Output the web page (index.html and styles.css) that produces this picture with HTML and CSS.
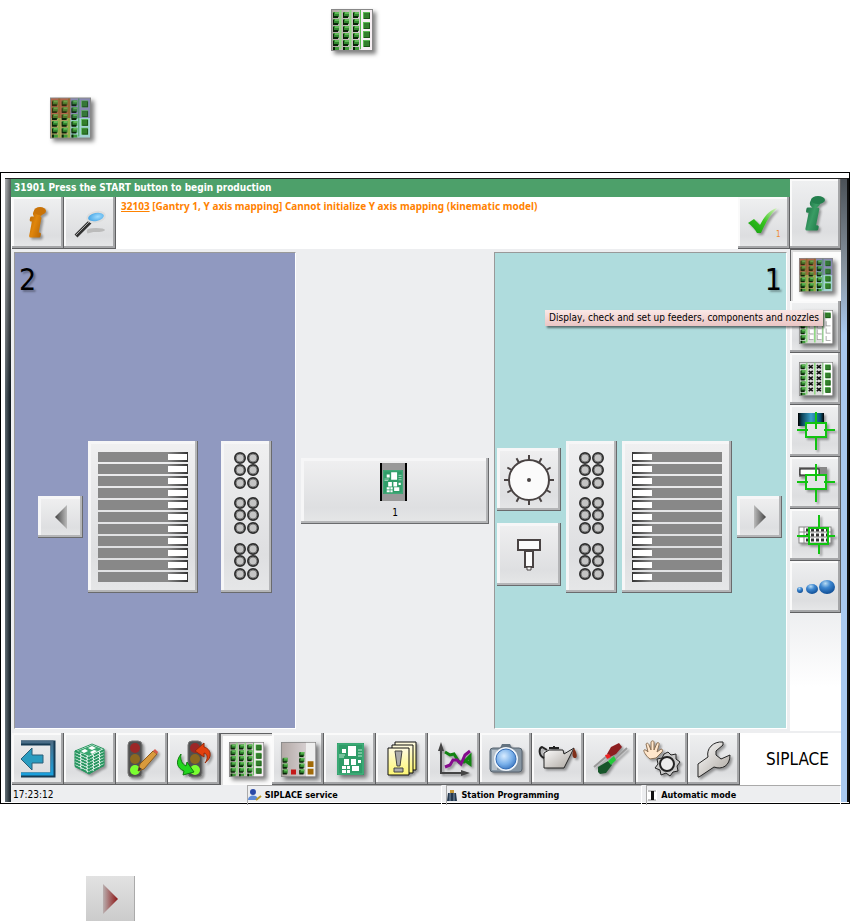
FILE: index.html
```
<!DOCTYPE html>
<html lang="en">
<head>
	<meta charset="utf-8">
	<title>SIPLACE station</title>
	<link rel="stylesheet" href="styles.css">
</head>
<body>
	<!-- shared icon parts -->
	<svg class="defs" width="0" height="0" aria-hidden="true">
		<defs>
			<linearGradient id="strip" x1="0" x2="1" y1="0" y2="0">
				<stop offset="0" stop-color="#b3a9a6"/><stop offset="1" stop-color="#e2dcdf"/>
			</linearGradient>
			<linearGradient id="arrowGrey"><stop offset="0" stop-color="#bbb"/><stop offset="1" stop-color="#444"/></linearGradient>
			<linearGradient id="arrowRed"><stop offset="0" stop-color="#b9b0b0"/><stop offset="1" stop-color="#8c1414"/></linearGradient>
			<linearGradient id="orange" x1="0" x2="1" y1="0" y2="1"><stop offset="0" stop-color="#a85a00"/><stop offset=".45" stop-color="#e0860c"/><stop offset="1" stop-color="#a85a00"/></linearGradient>
			<linearGradient id="green" x1="0" x2="1" y1="0" y2="1"><stop offset="0" stop-color="#0c5a34"/><stop offset=".5" stop-color="#3a9c64"/><stop offset="1" stop-color="#126b3c"/></linearGradient>
			<linearGradient id="tick" x1="0" x2="1" y1="1" y2="0"><stop offset="0" stop-color="#139a12"/><stop offset=".5" stop-color="#35c41c"/><stop offset="1" stop-color="#d4f3b8"/></linearGradient>
			<linearGradient id="steel" x1="0" x2="1" y1="0" y2="1"><stop offset="0" stop-color="#fff"/><stop offset="1" stop-color="#a9a39c"/></linearGradient>
			<linearGradient id="exit" x1="0" x2="0" y1="0" y2="1"><stop offset="0" stop-color="#4a6c86"/><stop offset="1" stop-color="#1a9fdc"/></linearGradient>
			<linearGradient id="tube"><stop offset="0" stop-color="#000"/><stop offset=".15" stop-color="#0c4358"/><stop offset=".5" stop-color="#3ba0c8"/><stop offset=".85" stop-color="#0c5878"/><stop offset="1" stop-color="#000"/></linearGradient>
			<radialGradient id="ball" cx=".4" cy=".25" r=".8"><stop offset="0" stop-color="#b8dcf4"/><stop offset=".4" stop-color="#3d86cf"/><stop offset="1" stop-color="#0a478f"/></radialGradient>
			<radialGradient id="lens" cx=".4" cy=".35" r=".7"><stop offset="0" stop-color="#d8ecff"/><stop offset=".6" stop-color="#79b0ea"/><stop offset="1" stop-color="#3b76c0"/></radialGradient>
			<radialGradient id="glass" cx=".6" cy=".5" r=".6"><stop offset="0" stop-color="#9fdcff"/><stop offset="1" stop-color="#3d9fe2"/></radialGradient>
			<linearGradient id="page" x1="0" x2="0" y1="0" y2="1"><stop offset="0" stop-color="#fffbe0"/><stop offset="1" stop-color="#fdf672"/></linearGradient>

			<g id="cell"><rect width="6" height="5" fill="#338a30"/><path d="M2 0h4v2H2z" fill="#62bb58"/><path d="M0 1h1v3h4v2H0z" fill="#0a2408"/></g>
			<g id="bigcell"><rect width="7" height="7" fill="#5cb854"/><path d="M1 1h6v6H1z" fill="#1c5216"/><rect x="1" y="1" width="5" height="5" fill="#33802c"/></g>
			<g id="hollow"><rect width="6" height="6" fill="#fff"/><path d="M0 0h1v5h5v1H0z" fill="#999"/></g>
			<g id="cross"><rect width="7" height="6" fill="#ddd"/><path d="M1 1l5 4M6 1L1 5" stroke="#111" stroke-width="2"/></g>
			<g id="col"><use href="#cell"/><use href="#cell" y="7"/><use href="#cell" y="14"/><use href="#cell" y="21"/><use href="#cell" y="28"/><path d="M0 35h6v3H0z" fill="#3f9a3a"/><path d="M0 35h2v3H0z" fill="#0a2408"/></g>
			<g id="hollowcol"><use href="#hollow"/><use href="#hollow" y="7"/><use href="#hollow" y="14"/><use href="#hollow" y="21"/><use href="#hollow" y="28"/></g>
			<g id="crosscol"><use href="#cross"/><use href="#cross" y="7"/><use href="#cross" y="14"/><use href="#cross" y="21"/><use href="#cross" y="28"/></g>
			<g id="bigcol"><use href="#bigcell"/><use href="#bigcell" y="10"/><use href="#bigcell" y="19"/><use href="#bigcell" y="28"/></g>
			<g id="lanes"><path d="M9.500 1v39M19.500 1v39" stroke="#8fd983" stroke-width="2"/><path d="M29.500 1v39" stroke="#55b84c"/></g>

			<symbol id="setup" viewBox="0 0 42 42">
				<rect width="42" height="42" fill="#888"/><rect x="1" y="1" width="40" height="40" fill="url(#strip)"/><rect x="30" y="1" width="11" height="40" fill="#f5eef2"/>
				<use href="#lanes"/><use href="#col" x="2" y="3"/><use href="#col" x="12" y="3"/><use href="#col" x="22" y="3"/><use href="#bigcol" x="32" y="3"/>
			</symbol>
			<symbol id="setupColor" viewBox="0 0 42 42">
				<rect width="42" height="42" fill="#888"/><path d="M1 1h20v20H1z" fill="#b8705a"/><path d="M1 21h20v20H1z" fill="#b8a068"/><path d="M21 1h20v20H21z" fill="#9496bd"/><path d="M21 21h20v20H21z" fill="#a3d2d4"/>
				<path d="M9.500 1v20M19.500 1v20" stroke="#8f7638" stroke-width="2"/><path d="M9.500 21v20M19.500 21v20" stroke="#8cb045" stroke-width="2"/><path d="M29.500 1v39" stroke="#439a55"/>
				<use href="#col" x="2" y="3"/><use href="#col" x="12" y="3"/><use href="#col" x="22" y="3"/><use href="#bigcol" x="32" y="3"/>
				<path d="M1 1h20v20H1z" fill="#a04820" opacity=".25"/><path d="M21 1h20v20H21z" fill="#404080" opacity=".15"/>
			</symbol>
			<symbol id="setupPart" viewBox="0 0 42 42">
				<rect width="42" height="42" fill="#888"/><rect x="1" y="1" width="40" height="40" fill="#ddd"/><rect x="30" y="1" width="11" height="40" fill="#fff"/>
				<use href="#lanes"/><use href="#col" x="2" y="3"/><use href="#hollowcol" x="12" y="3"/><use href="#hollowcol" x="22" y="3"/>
				<use href="#bigcell" x="32" y="3"/><use href="#hollow" x="33" y="14"/><use href="#hollow" x="33" y="23"/><use href="#hollow" x="33" y="32"/>
			</symbol>
			<symbol id="setupCross" viewBox="0 0 42 42">
				<rect width="42" height="42" fill="#888"/><rect x="1" y="1" width="40" height="40" fill="#ddd"/><rect x="30" y="1" width="11" height="40" fill="#fff"/>
				<use href="#lanes"/><use href="#col" x="2" y="3"/><use href="#crosscol" x="11" y="3"/><use href="#crosscol" x="21" y="3"/><use href="#bigcol" x="32" y="3"/>
			</symbol>
			<symbol id="board" viewBox="0 0 27 32">
				<rect width="27" height="32" fill="#2f9c68"/><path d="M1 1h25v30H1z" fill="none" stroke="#49b582"/>
				<g fill="#fff"><path d="M11 3h8v10h-8zM5 6h4v4H5zM7 16h5v6H7zM14 16h5v6h-5zM21 17h3v3h-3zM15 23h7v5h-7zM5 23h4v3H5zM10 23h3v3h-3zM5 27h4v3H5zM10 27h3v3h-3z"/></g>
				<path d="M21 7h4M21 10h4M21 13h4M2 12h6M2 14h5" stroke="#bfe7d2"/>
			</symbol>
			<symbol id="target" viewBox="0 0 40 40">
				<path d="M10 12h20v14H10z" fill="#e4e4e6"/><path d="M10 12h20v14H10zM20 1v17M20 26v13M1 19h11M28 19h11" fill="none" stroke="#12c412" stroke-width="2"/>
			</symbol>
			<symbol id="light" viewBox="0 0 18 38">
				<rect x="1" y="1" width="14" height="36" rx="4" fill="#505050" stroke="#777"/><circle cx="8" cy="8" r="5" fill="#9c2727"/><circle cx="8" cy="19" r="5" fill="#8c6820"/><circle cx="8" cy="30" r="5" fill="#7bff32"/>
			</symbol>
			<g id="cup"><circle cx="6" cy="6" r="5" fill="#c4c4c4" stroke="#2e2e2e" stroke-width="2"/><circle cx="6" cy="6" r="4" fill="none" stroke="#777"/></g>
			<g id="cups"><use href="#cup"/><use href="#cup" x="13"/><use href="#cup" y="12"/><use href="#cup" x="13" y="12"/><use href="#cup" y="25"/><use href="#cup" x="13" y="25"/></g>
			<symbol id="nozzles" viewBox="0 0 25 130"><use href="#cups"/><use href="#cups" y="45"/><use href="#cups" y="91"/></symbol>
			<symbol id="arrow" viewBox="0 0 12 24"><path d="M0 0l12 12L0 24z" fill="url(#arrowGrey)"/></symbol>
		</defs>
	</svg>

	<p class="line first"><svg class="tile" width="42" height="42"><use href="#setup"/></svg></p>
	<p class="line second"><svg class="tile" width="41" height="42"><use href="#setupColor"/></svg></p>

	<div class="frame">
		<div class="edge left"></div>
		<div class="app">
			<header class="head">
				<div class="status">31901 Press the START button to begin production</div>
				<div class="alert">
					<button class="btn" aria-label="Information">
						<svg class="shade" width="50" height="50"><text class="info" x="23" y="38" font-size="34" fill="url(#orange)" stroke="url(#orange)">i</text><ellipse cx="27" cy="13" rx="6" ry="4" fill="#c97308"/></svg>
					</button>
					<button class="btn" aria-label="Search">
						<svg width="36" height="36" viewBox="0 0 36 36">
							<ellipse cx="24" cy="25" rx="9" ry="2" fill="#bbb"/><path d="M15 27l8-2" stroke="#bbb" stroke-width="3"/>
							<path d="M4 31L18 17" stroke="#333" stroke-width="4"/><path d="M4 30L17 17" stroke="#aaa"/>
							<ellipse cx="24" cy="12" rx="9" ry="5" transform="rotate(-12 24 12)" fill="url(#glass)" stroke="#ddd" stroke-width="2"/>
						</svg>
					</button>
					<p class="message"><a href="#">32103</a> [Gantry 1, Y axis mapping] Cannot initialize Y axis mapping (kinematic model)</p>
					<button class="btn" aria-label="Confirm">
						<svg width="40" height="40" viewBox="0 0 40 40">
							<path class="shade" d="M4 20l6-4 6 6C20 14 25 7 33 5 26 12 22 19 17 30h-4C11 26 8 23 4 20z" fill="url(#tick)"/>
							<text class="count" x="32" y="34">1</text>
						</svg>
					</button>
				</div>
			</header>

			<nav class="side">
				<button class="btn help" aria-label="Help"><svg class="shade" width="50" height="64"><text class="info" x="22" y="47" font-size="40" fill="url(#green)" stroke="url(#green)">i</text><ellipse cx="27" cy="18" rx="7" ry="4" fill="#24804e"/></svg></button>
				<div class="hint">
					<button class="btn on" aria-describedby="tip" aria-label="Setup"><svg class="tile" width="34" height="34"><use href="#setupColor"/></svg></button>
					<span class="tip" id="tip" role="tooltip">Display, check and set up feeders, components and nozzles</span>
				</div>
				<button class="btn" aria-label="Partial setup"><svg class="tile" width="34" height="34"><use href="#setupPart"/></svg></button>
				<button class="btn" aria-label="Disabled tracks"><svg class="tile" width="34" height="34"><use href="#setupCross"/></svg></button>
				<button class="btn" aria-label="Teach tube">
					<svg class="shade" width="40" height="40"><rect x="2" y="2" width="26" height="13" fill="url(#tube)"/><use href="#target"/></svg>
				</button>
				<button class="btn" aria-label="Teach feeder">
					<svg class="shade" width="40" height="40"><rect x="3" y="4" width="28" height="10" fill="#888"/><rect x="4" y="6" width="19" height="6" fill="#fff" stroke="#111"/><use href="#target"/></svg>
				</button>
				<button class="btn" aria-label="Teach tray">
					<svg class="shade" width="40" height="40" viewBox="0 0 40 40">
						<rect x="3" y="12" width="32" height="16" fill="#fff" stroke="#888"/><path d="M3 17h32M3 22h32M8 12v16" stroke="#888"/>
						<path d="M10 15h24M10 20h24M10 25h24" stroke="#333" stroke-width="3" stroke-dasharray="3 2"/>
						<path d="M13 13h19v16H13zM23 0v13M23 29v10M1 21h12M32 21h7" fill="none" stroke="#12c412" stroke-width="2"/>
					</svg>
				</button>
				<button class="btn" aria-label="More">
					<svg width="40" height="20"><circle cx="4" cy="13" r="3" fill="url(#ball)"/><ellipse cx="16" cy="12" rx="6" ry="5" fill="url(#ball)"/><ellipse cx="31" cy="10" rx="8" ry="7" fill="url(#ball)"/></svg>
				</button>
			</nav>

			<main class="areas">
				<section class="area blue">
					<h2>2</h2>
					<div class="parts">
						<button class="raised move" aria-label="Previous"><svg class="flip" width="12" height="24"><use href="#arrow"/></svg></button>
						<button class="raised feeders flip" aria-label="Feeders, area 2"><i></i><i></i><i></i><i></i><i></i><i></i><i></i><i></i><i></i><i></i><i></i></button>
						<button class="raised nozzles" aria-label="Nozzles, area 2"><svg width="25" height="130"><use href="#nozzles"/></svg></button>
					</div>
				</section>
				<section class="area middle">
					<button class="raised conveyor">
						<svg width="30" height="38" viewBox="0 0 30 38"><path d="M2 0h24v38H2z" fill="#999"/><path d="M0 0h2v38H0zM25 0h2v38h-2z" fill="#fff"/><path d="M1 0v38M26 0v38" stroke="#000" stroke-width="2"/><use href="#board" x="3" y="7" width="20" height="24"/></svg>
						1
					</button>
				</section>
				<section class="area teal">
					<h2>1</h2>
					<div class="parts">
						<div class="tools">
							<button class="raised tool" aria-label="Head">
								<svg width="52" height="52" viewBox="-26 -26 52 52">
									<g stroke="#494343" stroke-width="2"><path d="M0-25v5M0 20v5M-25 0h5M20 0h5"/><path d="M0-25v5M0 20v5M-25 0h5M20 0h5" transform="rotate(30)"/><path d="M0-25v5M0 20v5M-25 0h5M20 0h5" transform="rotate(60)"/></g>
									<circle r="20" fill="#fbfbfb" stroke="#494343" stroke-width="2"/><circle r="2" fill="#494343"/>
								</svg>
							</button>
							<button class="raised tool" aria-label="Nozzle">
								<svg width="24" height="32" viewBox="0 0 24 32"><g fill="#fbfbfb" stroke="#494343" stroke-width="2"><path d="M1 1h22v10H1z"/><path d="M8 12h8v16H8z"/><path d="M10 28h4v3h-4z" stroke-width="1"/></g></svg>
							</button>
						</div>
						<button class="raised nozzles" aria-label="Nozzles, area 1"><svg width="25" height="130"><use href="#nozzles"/></svg></button>
						<button class="raised feeders" aria-label="Feeders, area 1"><i></i><i></i><i></i><i></i><i></i><i></i><i></i><i></i><i></i><i></i><i></i></button>
						<button class="raised move" aria-label="Next"><svg width="12" height="24"><use href="#arrow"/></svg></button>
					</div>
				</section>
			</main>

			<div class="toolbar">
				<button class="btn" aria-label="Exit">
					<svg width="40" height="40" viewBox="0 0 40 40"><path d="M3 4h32v32H3" fill="none" stroke="#173b54" stroke-width="5"/><path d="M3 3h31v32H3" fill="none" stroke="url(#exit)" stroke-width="3"/><path d="M3 20L14 9v7h11v8H14v7z" fill="#2a9cc0" stroke="#2a5f78"/></svg>
				</button>
				<button class="btn" aria-label="Board stack">
					<svg class="shade" width="36" height="34" viewBox="0 0 36 34">
						<path d="M3 9v15l14 8 15-9V7L20 2z" fill="#fff" stroke="#26955f"/><path d="M3 9l14 7 15-8M3 12l14 7 15-8M3 15l14 7 15-8M3 18l14 7 15-8M3 21l14 7 15-8M3 24l14 7 15-8" fill="none" stroke="#26955f" stroke-width="2" stroke-dasharray="6 1"/>
						<path d="M5 9l15-6 10 4-13 7z" fill="#39a66f"/><path d="M9 9l4-2 3 2-4 2zM16 6l4-2 4 2-4 2zM18 10l4-2 3 1-5 3z" fill="#fff"/>
					</svg>
				</button>
				<button class="btn" aria-label="Edit job">
					<svg class="shade" width="36" height="40" viewBox="0 0 36 40"><use href="#light" x="3" y="1" width="18" height="38"/><path d="M14 32l2-7L29 12l4 3-13 15z" fill="#d99a3c" stroke="#8c5a1c"/><path d="M29 12l2-2 3 3-1 2z" fill="#d85a4a"/><path d="M14 32l1-4 3 2z" fill="#333"/></svg>
				</button>
				<button class="btn" aria-label="Restart job">
					<svg class="shade" width="38" height="40" viewBox="0 0 38 40"><use href="#light" x="12" y="1" width="18" height="38"/><path d="M30 24c8-6 6-14-1-16V4l-9 8 9 6v-4c4 1 4 6 1 10z" fill="#e2410f" stroke="#962808"/><path d="M6 15c-6 8-4 14 3 17l-1 4 11-3-7-10-1 4c-4-2-6-6-5-12z" fill="#22d51e" stroke="#107a10"/></svg>
				</button>
				<button class="btn on" aria-label="Setup view"><svg class="tile" width="35" height="35"><use href="#setup"/></svg></button>
				<button class="btn" aria-label="Fill levels">
					<svg class="tile" width="35" height="35" viewBox="0 0 42 42"><rect width="42" height="42" fill="#888"/><rect x="1" y="1" width="40" height="40" fill="url(#strip)"/><rect x="30" y="1" width="11" height="40" fill="#eee"/>
						<use href="#cell" x="2" y="19"/><use href="#cell" x="2" y="26"/><use href="#cell" x="2" y="33"/><use href="#cell" x="22" y="12"/><use href="#cell" x="22" y="19"/><use href="#cell" x="22" y="26"/><use href="#cell" x="22" y="33"/>
						<path d="M12 33h6v6h-6z" fill="#c41919"/><path d="M32 23h7v7h-7zM32 32h7v7h-7z" fill="#a16a08"/></svg>
				</button>
				<button class="btn" aria-label="Board"><svg class="tile" width="27" height="32"><use href="#board"/></svg></button>
				<button class="btn" aria-label="Messages">
					<svg class="shade" width="32" height="36" viewBox="0 0 32 36"><g fill="url(#page)" stroke="#111"><path d="M9 1h21v28H9z"/><path d="M6 4h21v28H6z"/><path d="M2 7h21v27H2z"/></g><path d="M9 10h7l-2 15h-3zM8 27h9v4H8z" fill="#aaa" stroke="#444"/></svg>
				</button>
				<button class="btn" aria-label="Statistics">
					<svg class="shade" width="36" height="36" viewBox="0 0 36 36"><path d="M5 33V6M4 32h27" stroke="#444" stroke-width="2"/><path d="M5 1l3 9H2zM34 32l-9-3v6z" fill="#444"/><path d="M9 11l5 3 4-1 5 8 5 0 6-6 0 8-7-5" fill="none" stroke="#118311" stroke-width="3"/><path d="M9 26l5-2 3-5 4 0 4 4 4-9 5-4" fill="none" stroke="#850b8c" stroke-width="3"/></svg>
				</button>
				<button class="btn" aria-label="Camera">
					<svg class="shade" width="36" height="32" viewBox="0 0 36 32"><path d="M12 5l2-4h8l2 4z" fill="#63727f"/><rect x="2" y="5" width="32" height="24" rx="3" fill="#8796a3" stroke="#56636e"/><path d="M4 7h5v20H4z" fill="#b6c0c8"/><circle cx="18" cy="16" r="12" fill="#eef4fa"/><circle cx="18" cy="16" r="10" fill="url(#lens)" stroke="#336cb5"/></svg>
				</button>
				<button class="btn" aria-label="Lubrication">
					<svg class="shade" width="40" height="28" viewBox="0 0 40 28"><path d="M6 8l5-3h14l1 4 10-6-10 20H6z" fill="url(#steel)" stroke="#222" stroke-width="1"/><path d="M6 13C0 10 1 3 4 2l5 3" fill="none" stroke="#222" stroke-width="2"/><path d="M11 3h10M16 1v3" stroke="#222" stroke-width="2"/><path d="M36 3c4 7 3 10 1 10s-4-3-1-10z" fill="#80301a"/></svg>
				</button>
				<button class="btn" aria-label="Tools">
					<svg class="shade" width="36" height="34" viewBox="0 0 36 34"><path d="M2 25l14-12M35 6L22 18" stroke="#999" stroke-width="2"/><path d="M15 12l4-7 8-4 3 4-6 7-6 3z" fill="#8d1e20"/><path d="M13 13l4-1 2 3-4 2z" fill="#e22"/><path d="M6 25l10-6 4 4-6 8-6 1-2-2z" fill="#17562a"/><path d="M16 19l6-5 2 4-5 5z" fill="#23c93a"/></svg>
				</button>
				<button class="btn" aria-label="Manual functions">
					<svg class="shade" width="40" height="40" viewBox="0 0 40 40"><path d="M8 20C4 17 1 12 2 11s3 1 4 2L4 5c1-2 3 0 3 1l2 5V3c1-2 3-1 3 0v8l3-7c1-1 3 0 2 2l-2 7 4-3c2 0 2 2 1 3l-6 6z" fill="#ffe6cb" stroke="#8b7055"/><path d="M26 13l3 3 5-1 0 5 4 3-3 4 1 5-5 1-3 4-4-3-5 2-1-5-5-2 3-4-1-5 5-1 2-4z" fill="#c9c9c9" stroke="#222"/><circle cx="25" cy="25" r="7" fill="#ececec" stroke="#222" stroke-width="2"/></svg>
				</button>
				<button class="btn" aria-label="Service">
					<svg class="shade" width="38" height="38" viewBox="0 0 38 38"><path d="M3 37V24l10-7C11 9 18 1 28 2l0 3-7 6v4l5 4 9-4c0 11-8 15-16 12L4 37z" fill="url(#steel)" stroke="#222"/></svg>
				</button>
				<div class="brand">SIPLACE</div>
			</div>

			<footer class="foot">
				<time>17:23:12</time>
				<span class="field">
					<svg width="14" height="13"><circle cx="5" cy="3" r="3" fill="#2a49a8"/><path d="M0 11c0-6 10-6 10 0z" fill="#5d8ad6"/><path d="M8 11l5-4" stroke="#b9982a" stroke-width="2"/></svg>
					SIPLACE service
				</span>
				<span class="field">
					<svg width="11" height="12"><path d="M3 0h4v3H3z" fill="#c79a3a"/><path d="M1 3h8l1 8H0z" fill="#24384e"/><path d="M3 3v8M7 3v8" stroke="#7f93a8"/></svg>
					Station Programming
				</span>
				<span class="field">
					<svg width="11" height="11"><path d="M0 0h10v10H0z" fill="#fff"/><path d="M1 1h8M1 10h8" stroke="#888"/><path d="M4 1h3v9H4z" fill="#111"/></svg>
					Automatic mode
				</span>
			</footer>
		</div>
		<div class="edge right"></div>
	</div>

	<button class="next" aria-label="Next area"><svg width="15" height="30" viewBox="0 0 15 30"><path d="M0 0l15 15L0 30z" fill="url(#arrowRed)"/></svg></button>
</body>
</html>
```
FILE: styles.css
```
*{
	box-sizing: border-box;
}
body{
	margin: 0;
	background: #fff;
	color: #000;
	font-family: "DejaVu Sans Condensed", "DejaVu Sans", sans-serif;
	font-stretch: condensed;
	font-size: 10px;
}
svg{
	display: block;
	flex: none;
}
p, h2{
	margin: 0;
}
button{
	font: inherit;
	color: inherit;
	border: 0;
	padding: 0;
	cursor: pointer;
}
.defs{
	position: absolute;
}
.tile{
	filter: drop-shadow(3px 3px 2px rgba(0, 0, 0, .5));
}
.shade{
	filter: drop-shadow(2px 2px 1px rgba(0, 0, 0, .35));
}
.flip{
	transform: scaleX(-1);
}

/* icons in the text above the screen */
.line{
	height: 86px;
	padding-top: 9px;
}
.first{
	padding-left: 331px;
}
.second{
	padding-top: 11px;
	padding-left: 50px;
}

.frame{
	display: flex;
	border: 1px solid #000;
	padding: 5px 0 1px 4px;
}
.edge{
	flex: none;
	width: 6px;
	border-top: 1px solid #222;
}
.left{
	background: linear-gradient(to right, rgba(255, 255, 255, .3), rgba(0, 0, 0, .4)), linear-gradient(#8c9194, #3b4349 25%, #14242e 35%, #22333d);
}
.right{
	width: 8px;
	border-right: 2px solid #111;
	background: linear-gradient(#4b5157, #8b98a4 15%, #a9c9f0 25%, #a9c9f0);
}
.app{
	flex: 1;
	min-width: 0;
	display: grid;
	grid-template-columns: minmax(0, 1fr) 51px;
	background: #edeef0;
	border-top: 1px solid #222;
}

.btn{
	flex: none;
	width: 52px;
	height: 52px;
	display: flex;
	align-items: center;
	justify-content: center;
	background: linear-gradient(#eff0f1, #dddee0 75%, #e8e9ea);
	box-shadow: inset -1px -1px #606163, inset -3px -3px #a5a6a8, inset 2px 2px #fafafa;
}
.on{
	background: #fcfcfc;
	box-shadow: inset 1px 1px #606163, inset 3px 3px #ddd;
}
.raised{
	display: flex;
	align-items: center;
	justify-content: center;
	background: linear-gradient(#f0f0f1, #dedfe1 75%, #e6e7e8);
	box-shadow: inset -1px -1px #6a6b6d, inset -3px -3px #b4b5b7, inset 3px 3px #f6f6f7;
}

/* message header */
.status{
	height: 18px;
	padding-left: 3px;
	line-height: 18px;
	background: #4da06a;
	color: #fff;
	font-weight: bold;
}
.alert{
	display: flex;
	background: #fff;
	padding-left: 1px;
}
.message{
	flex: 1;
	padding: 2px 5px;
	line-height: 14px;
	color: #ff8200;
	font-family: "Noto Sans", sans-serif;
	font-stretch: normal;
	font-weight: bold;
}
.message a{
	color: inherit;
}
.info{
	font-family: "DejaVu Serif", serif;
	font-stretch: normal;
	font-style: italic;
	font-weight: bold;
	text-anchor: middle;
	stroke-width: 3px;
	stroke-linejoin: round;
}
.count{
	font-size: 8px;
	fill: #f08a2c;
}

/* right column */
.side{
	grid-row: 1 / 3;
	grid-column: 2;
	display: flex;
	flex-direction: column;
	background: linear-gradient(#edeef0 78%, #fff 92%);
}
.side .btn{
	width: 51px;
}
.side .help{
	height: 70px;
}
.hint{
	position: relative;
}
.tip{
	position: absolute;
	top: 61px;
	right: 18px;
	padding: 0 4px;
	line-height: 16px;
	white-space: nowrap;
	background: linear-gradient(#fae8e6, #eac5c4);
	box-shadow: 2px 2px 2px rgba(0, 0, 0, .5);
	z-index: 1;
}

/* placement areas */
.areas{
	grid-column: 1;
	display: grid;
	grid-template-columns: 282fr 193fr 293fr;
	gap: 3px;
	padding: 3px 3px 2px 3px;
}
.area{
	min-height: 477px;
	display: flex;
	flex-direction: column;
	border: 1px solid #999;
	border-right-color: #fff;
	border-bottom-color: #fff;
}
.blue{
	background: #9099c0;
}
.teal{
	background: #afdcdd;
}
.middle{
	border-color: transparent;
	justify-content: center;
	padding: 0 1px;
}
.area h2{
	height: 53px;
	padding: 7px 4px;
	font-size: 30px;
	line-height: 40px;
	font-weight: normal;
	text-shadow: 2px 2px 2px rgba(0, 0, 0, .3);
}
.teal h2{
	text-align: right;
}
.parts{
	flex: 1;
	display: flex;
	align-items: center;
	gap: 5px;
	padding: 0 2px;
}
.blue .parts{
	padding-left: 23px;
}
.blue .nozzles{
	margin-left: 18px;
}
.move{
	width: 45px;
	height: 42px;
}
.feeders{
	width: 110px;
	height: 152px;
	flex-direction: column;
	align-items: stretch;
	gap: 2px;
	padding: 0 10px;
}
.blue .feeders{
	box-shadow: inset 1px -1px #6a6b6d, inset 3px -3px #b4b5b7, inset -3px 3px #f6f6f7;
}
.feeders i{
	height: 10px;
	background: linear-gradient(#fff, #fff) 1px 2px / 19px 6px no-repeat, linear-gradient(to right, #333, #888) 0 0 / 20px 10px no-repeat, #888;
}
.nozzles{
	width: 51px;
	height: 152px;
}
.tools{
	display: flex;
	flex-direction: column;
	gap: 12px;
}
.tool{
	width: 64px;
	height: 63px;
}
.conveyor{
	height: 66px;
	flex-direction: column;
	gap: 6px;
}

.toolbar{
	grid-column: 1 / 3;
	display: flex;
	padding: 2px 0 0 1px;
}
.brand{
	flex: 1;
	display: flex;
	align-items: center;
	justify-content: center;
	padding-left: 14px;
	background: #fff;
	font-size: 17px;
}

.foot{
	grid-column: 1 / 3;
	display: grid;
	grid-template-columns: 232fr 196fr 196fr 195fr;
	gap: 4px;
	height: 17px;
	line-height: 19px;
}
.foot time{
	padding-left: 2px;
}
.field{
	display: flex;
	align-items: center;
	gap: 3px;
	border: 1px solid #aaa;
	border-right-color: #fff;
	border-bottom: 0;
	font-size: 9px;
	font-weight: bold;
}

.next{
	display: flex;
	align-items: center;
	justify-content: center;
	width: 49px;
	height: 45px;
	margin: 72px 0 0 86px;
	background: linear-gradient(#e2e2e2, #cbcbcb);
	box-shadow: inset -1px 0 #aaa;
}
```
